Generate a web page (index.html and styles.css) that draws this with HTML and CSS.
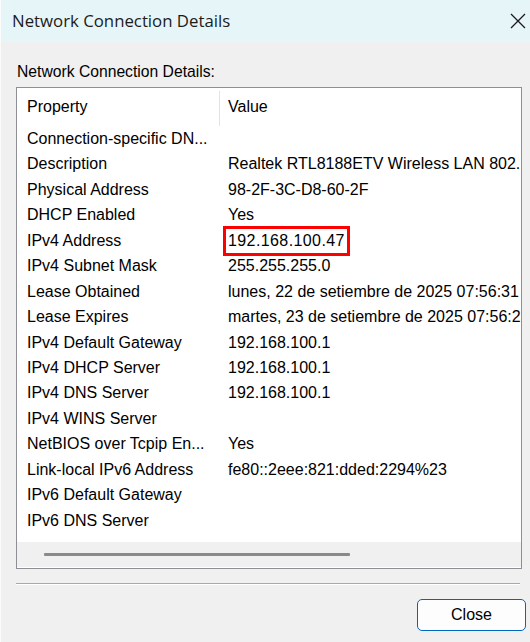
FILE: index.html
```html
<!DOCTYPE html>
<html>
<head>
<meta charset="utf-8">
<link rel="stylesheet" href="styles.css">
</head>
<body>
<div class="window">
  <div class="titlebar">
    <span class="title">Network Connection Details</span>
    <svg class="close-x" width="16" height="16" viewBox="0 0 16 16"><path d="M1 1 L15 15 M15 1 L1 15" stroke="#1a1a1a" stroke-width="1.3" fill="none"/></svg>
  </div>
  <div class="content">
    <div class="label">Network Connection Details:</div>
    <div class="listbox">
      <div class="header">
        <div class="hcell c1">Property</div>
        <div class="hcell c2">Value</div>
      </div>
      <div class="rows">
        <div class="row"><span class="c1">Connection-specific DN...</span><span class="c2"></span></div>
        <div class="row"><span class="c1">Description</span><span class="c2">Realtek RTL8188ETV Wireless LAN 802.11n USB 2.0 Network Adapter</span></div>
        <div class="row"><span class="c1">Physical Address</span><span class="c2">98-2F-3C-D8-60-2F</span></div>
        <div class="row"><span class="c1">DHCP Enabled</span><span class="c2">Yes</span></div>
        <div class="row"><span class="c1">IPv4 Address</span><span class="c2"><span class="mark">192.168.100.47</span></span></div>
        <div class="row"><span class="c1">IPv4 Subnet Mask</span><span class="c2">255.255.255.0</span></div>
        <div class="row"><span class="c1">Lease Obtained</span><span class="c2">lunes, 22 de setiembre de 2025 07:56:31</span></div>
        <div class="row"><span class="c1">Lease Expires</span><span class="c2">martes, 23 de setiembre de 2025 07:56:28</span></div>
        <div class="row"><span class="c1">IPv4 Default Gateway</span><span class="c2">192.168.100.1</span></div>
        <div class="row"><span class="c1">IPv4 DHCP Server</span><span class="c2">192.168.100.1</span></div>
        <div class="row"><span class="c1">IPv4 DNS Server</span><span class="c2">192.168.100.1</span></div>
        <div class="row"><span class="c1">IPv4 WINS Server</span><span class="c2"></span></div>
        <div class="row"><span class="c1">NetBIOS over Tcpip En...</span><span class="c2">Yes</span></div>
        <div class="row"><span class="c1">Link-local IPv6 Address</span><span class="c2">fe80::2eee:821:dded:2294%23</span></div>
        <div class="row"><span class="c1">IPv6 Default Gateway</span><span class="c2"></span></div>
        <div class="row"><span class="c1">IPv6 DNS Server</span><span class="c2"></span></div>
      </div>
      <div class="hscroll"><div class="thumb"></div></div>
    </div>
    <div class="sep"></div>
    <div class="footer"><button class="btn">Close</button></div>
  </div>
</div>
</body>
</html>
```
FILE: styles.css
```css
* { box-sizing: border-box; }
html, body { margin: 0; padding: 0; }
body {
  width: 530px;
  height: 642px;
  overflow: hidden;
  background: #f0f0f0;
  font-family: "Liberation Sans", Arial, sans-serif;
  color: #000;
}
.window {
  height: 642px;
  border-left: 1px solid #fbfbfb;
  display: flex;
  flex-direction: column;
}
.titlebar {
  height: 42px;
  background: #e6f5f8;
  display: flex;
  align-items: center;
  justify-content: space-between;
  padding: 0 4px 1px 11px;
  flex: none;
}
.title {
  font-family: "Open Sans", "Noto Sans", sans-serif;
  font-size: 16.8px;
  color: #1b1b1b;
}
.close-x { margin-top: 1px; }
.content {
  padding: 20px 9px 0 15px;
}
.label {
  font-size: 15.7px;
  line-height: 20px;
  padding-left: 1px;
}
.listbox {
  margin-top: 5px;
  width: 506px;
  height: 482px;
  border: 1px solid #8e8f94;
  background: #fff;
  display: flex;
  flex-direction: column;
  overflow: hidden;
}
.header {
  display: flex;
  height: 38px;
  padding-top: 3px;
  flex: none;
}
.hcell {
  font-size: 16px;
  line-height: 32px;
}
.c1 { width: 202px; padding-left: 10px; flex: none; white-space: nowrap; }
.c2 { padding-left: 9px; white-space: nowrap; }
.header .c2 { border-left: 1px solid #e3e3e3; padding-left: 8px; }
.rows { flex: 1; overflow: hidden; }
.row {
  display: flex;
  height: 25.45px;
  line-height: 25px;
  font-size: 16px;
  white-space: nowrap;
}
.mark {
  display: inline-block;
  outline: 3px solid #f00;
  line-height: 24px;
  margin-top: -2px;
  margin-left: -2px;
  padding: 0 2px 0 2px;
  letter-spacing: 0.4px;
}
.hscroll {
  height: 25px;
  background: #f0f0f0;
  flex: none;
  display: flex;
  align-items: center;
  padding-left: 27px;
  margin-bottom: 1px;
}
.thumb {
  width: 306px;
  height: 3px;
  background: #8a8a8a;
  border-radius: 1px;
}
.sep {
  margin-top: 14px;
  width: 504px;
  height: 2px;
  border-top: 1px solid #a9a9a9;
  border-bottom: 1px solid #fff;
}
.footer {
  display: flex;
  justify-content: flex-end;
  padding-top: 14px;
  margin-right: -5px;
}
.btn {
  width: 109px;
  height: 32px;
  border: 1.5px solid #0067c0;
  border-radius: 5px;
  background: #fdfdfd;
  font-family: "Liberation Sans", Arial, sans-serif;
  font-size: 16px;
  color: #000;
}
```
